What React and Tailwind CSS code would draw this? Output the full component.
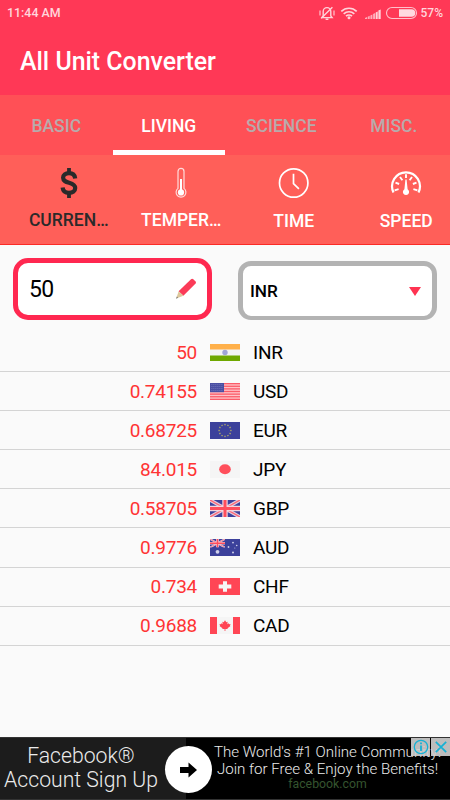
import { useState } from 'react';

const TABS = ['BASIC', 'LIVING', 'SCIENCE', 'MISC.'];

const RATES = [
    { code: 'INR', value: '50', Flag: IndiaFlag },
    { code: 'USD', value: '0.74155', Flag: UsaFlag },
    { code: 'EUR', value: '0.68725', Flag: EuFlag },
    { code: 'JPY', value: '84.015', Flag: JapanFlag },
    { code: 'GBP', value: '0.58705', Flag: UkFlag },
    { code: 'AUD', value: '0.9776', Flag: AustraliaFlag },
    { code: 'CHF', value: '0.734', Flag: SwissFlag },
    { code: 'CAD', value: '0.9688', Flag: CanadaFlag },
];

const UNITS = [
    { label: 'CURREN…', Icon: DollarIcon },
    { label: 'TEMPER…', Icon: ThermometerIcon },
    { label: 'TIME', Icon: ClockIcon },
    { label: 'SPEED', Icon: GaugeIcon },
];

function FlagBox({ children }) {
    return (
        <svg className="w-[30px] h-[17px] shrink-0" viewBox="0 0 30 17" preserveAspectRatio="none">
            {children}
        </svg>
    );
}

function IndiaFlag() {
    return (
        <FlagBox>
            <rect width="30" height="17" fill="#f4f4f4" />
            <rect width="30" height="5.5" fill="#ffb04a" />
            <rect y="11.5" width="30" height="5.5" fill="#6fa800" />
            <circle cx="15" cy="8.5" r="2.7" fill="#a0a4d6" />
        </FlagBox>
    );
}

function UsaFlag() {
    return (
        <FlagBox>
            <rect width="30" height="17" fill="#ffc3c8" />
            {[0, 1, 2, 3, 4, 5, 6].map((i) => (
                <rect key={i} y={i * 2.62} width="30" height="1.3" fill="#fb5c69" />
            ))}
            <rect width="14" height="9.2" fill="#4a4fa3" />
            {[1.5, 3.5, 5.5, 7.5].map((y) => (
                <path key={y} d={`M1.5 ${y}H13`} stroke="#9094cc" strokeWidth="0.7" strokeDasharray="0.8 1.2" />
            ))}
        </FlagBox>
    );
}

function EuFlag() {
    return (
        <FlagBox>
            <rect width="30" height="17" fill="#3c419b" />
            {[0, 30, 60, 90, 120, 150, 180, 210, 240, 270, 300, 330].map((a) => (
                <rect key={a} x="14.3" y="1.9" width="1.4" height="1.4" fill="#a9a56c" transform={`rotate(${a} 15 8.5)`} />
            ))}
        </FlagBox>
    );
}

function JapanFlag() {
    return (
        <FlagBox>
            <rect width="30" height="17" fill="#f5f5f5" />
            <ellipse cx="15" cy="8.3" rx="5.8" ry="5" fill="#ff4f5b" />
        </FlagBox>
    );
}

function UnionJack() {
    return (
        <>
            <rect width="30" height="17" fill="#3d429c" />
            <path d="M0 0L30 17M30 0L0 17" stroke="#e3cfe0" strokeWidth="3.6" />
            <path d="M0 0L30 17M30 0L0 17" stroke="#ff6673" strokeWidth="1.3" />
            <path d="M15 0V17M0 8.5H30" stroke="#f3d5dd" strokeWidth="5.4" />
            <path d="M15 0V17M0 8.5H30" stroke="#ff4d5c" strokeWidth="3" />
        </>
    );
}

function UkFlag() {
    return (
        <FlagBox>
            <UnionJack />
        </FlagBox>
    );
}

function AustraliaFlag() {
    return (
        <FlagBox>
            <rect width="30" height="17" fill="#3c419b" />
            <svg width="15" height="8.5" viewBox="0 0 30 17" preserveAspectRatio="none">
                <UnionJack />
            </svg>
            <g fill="#cfd0ea">
                <circle cx="7.5" cy="12.8" r="1.9" />
                <circle cx="18.5" cy="8" r="0.9" />
                <circle cx="23" cy="3.6" r="0.9" />
                <circle cx="26.7" cy="6.5" r="0.8" />
                <circle cx="24.8" cy="9" r="0.5" />
                <circle cx="23" cy="13.4" r="1" />
            </g>
        </FlagBox>
    );
}

function SwissFlag() {
    return (
        <FlagBox>
            <rect width="30" height="17" fill="#ff4655" />
            <path d="M13 3.3h4v3.3h4.3v3.8H17v3.3h-4v-3.3H8.7V6.6H13z" fill="#f5f5f5" />
        </FlagBox>
    );
}

function CanadaFlag() {
    return (
        <FlagBox>
            <rect width="30" height="17" fill="#f5f5f5" />
            <rect width="7" height="17" fill="#ff4655" />
            <rect x="23" width="7" height="17" fill="#ff4655" />
            <path
                d="M15 3.2l1.3 2 1.3-.5-.2 2.6 1.4-1 .4.9 1.4-.2-.7 1.5.6.6-3 2.1.2.9-2.3-.2v2h-.8v-2l-2.3.2.2-.9-3-2.1.6-.6-.7-1.5 1.4.2.4-.9 1.4 1-.2-2.6 1.3.5z"
                fill="#ff4655"
            />
        </FlagBox>
    );
}

function DollarIcon() {
    return (
        <svg className="w-8 h-8" viewBox="0 0 32 32" fill="none" stroke="#2a2a2a">
            <path d="M16 1v5M16 26v5" strokeWidth="3.8" />
            <path
                d="M22.2 11.4C21.800 8 19.700 6.200 16 6.200c-3.600 0-5.900 1.800-5.900 4.600 0 3.200 2.800 4 6 4.900 3.700 1.100 6.100 2.200 6.100 5.300s-2.500 4.900-6.200 4.900c-3.600 0-6-1.800-6.400-5.400"
                strokeWidth="4.2"
            />
        </svg>
    );
}

function ThermometerIcon() {
    return (
        <svg className="w-8 h-8" viewBox="0 0 32 32" fill="none">
            <path d="M13 21.4V4.4a3 3 0 0 1 6 0v17a4.9 4.9 0 1 1-6 0z" stroke="#ffdcdb" strokeWidth="1.2" />
            <path d="M16 12v13" stroke="white" strokeWidth="2" />
            <circle cx="16" cy="25.4" r="3.1" fill="white" />
        </svg>
    );
}

function ClockIcon() {
    return (
        <svg className="w-8 h-8" viewBox="0 0 32 32" fill="none" stroke="white">
            <circle cx="15.7" cy="16" r="14.2" strokeWidth="1.7" />
            <path d="M15.5 6.8v9.8l5.4 5.2" strokeWidth="1.7" />
        </svg>
    );
}

function GaugeIcon() {
    return (
        <svg className="w-8 h-8" viewBox="0 0 32 32" fill="none" stroke="white">
            <path d="M3.5 25.4A13.9 13.9 0 1 1 28.5 25.4" strokeWidth="2.2" />
            <path
                d="M4.6 23.4l4-1.2M5.5 15.6l3.6 1.4M10 10l2.4 3.2M16 7.3v3.8M22 10l-2.4 3.2M26.5 15.6l-3.6 1.4M27.4 23.4l-4-1.2"
                strokeWidth="1.9"
            />
            <path d="M15.4 12.5h1.2l1 9.8a3.1 3.1 0 1 1-3.2 0z" fill="white" stroke="none" />
        </svg>
    );
}

function StatusIcons() {
    return (
        <svg className="w-[100px] h-[14px]" viewBox="0 0 100 14" fill="none">
            <g stroke="#ffd3da" strokeWidth="1.4">
                <path d="M4.2 10V5.400a3.800 3.800 0 0 1 7.600 0V10l1.300 1.600H3z" />
                <path d="M2.200 12.200L13.400 1.200M6.600 13.200h2.800" />
                <path d="M1 4.500v5M15 4.500v5" strokeWidth="1.100" />
            </g>
            <g stroke="#ffd3da" strokeWidth="1.700">
                <path d="M22.300 5.400a11 11 0 0 1 15.400 0M24.700 7.900a7.600 7.600 0 0 1 10.600 0M27 10.200a4.400 4.400 0 0 1 6 0" />
            </g>
            <circle cx="30" cy="11.800" r="1.500" fill="#ffd3da" />
            <g fill="#ffabb9">
                <path d="M46 13v-1l2-.9V13zM48.700 13v-2.300l2-.9V13zM51.400 13V9.400l2-1V13zM54.100 13V7.900l2-1V13z" />
                <path d="M56.700 13V6.500l2-1V13zM59.400 13V4.600l2.300-1.200V13z" fill="#ffd3da" />
            </g>
            <rect x="67.500" y="1.500" width="30" height="11" rx="5.500" stroke="#ffc0cb" strokeWidth="1.100" />
            <path d="M80 3.200H92.500a3.800 3.800 0 0 1 0 7.600H80z" fill="#ffd9df" />
        </svg>
    );
}

function Pencil() {
    return (
        <svg className="w-[22px] h-[22px]" viewBox="0 0 22 22">
            <path d="M3.6 13.3L16 1.3q1.200-.9 2.300 0l2.300 2.300q.8 1 0 2L8.400 17.800z" fill="#fb3b58" />
            <path d="M3.6 13.3L8.4 17.8 1.3 20.600z" fill="#ddc79b" />
            <path d="M1.8 18.6l1.3 1.2-2 1z" fill="#777" />
        </svg>
    );
}

export default function App() {
    const [tab, setTab] = useState('LIVING');
    const [unit, setUnit] = useState('CURREN…');

    return (
        <div className="w-[450px] h-[800px] flex flex-col overflow-hidden bg-[#fafafa] text-black font-[Roboto,sans-serif]">
            <header className="h-[95px] shrink-0 bg-[#ff3856] text-white">
                <div className="h-[26px] flex items-center justify-between pl-[7px] pr-[7px] text-[#ffd6dc]">
                    <span className="text-[12.4px] font-medium">11:44 AM</span>
                    <div className="flex items-center gap-[2px]">
                        <StatusIcons />
                        <span className="text-[12px] font-medium">57%</span>
                    </div>
                </div>
                <h1 className="h-[70px] flex items-center pt-[2px] pl-5 text-[24.9px] font-medium">All Unit Converter</h1>
            </header>

            <nav className="h-[60px] shrink-0 grid grid-cols-4 bg-[#ff5056]">
                {TABS.map((name) => (
                    <button
                        key={name}
                        onClick={() => setTab(name)}
                        className={`pt-[7px] border-b-5 text-[17.5px] font-medium ${
                            tab === name ? 'text-white border-white' : 'text-[#b8aaab] border-transparent'
                        }`}
                    >
                        {name}
                    </button>
                ))}
            </nav>

            <nav className="h-[90px] shrink-0 grid grid-cols-4 bg-[#ff5f59] border-b border-[#fb2b26]">
                {UNITS.map(({ label, Icon }) => (
                    <button
                        key={label}
                        onClick={() => setUnit(label)}
                        className={`flex flex-col items-center pt-3 pl-[25px] text-[17.5px] font-medium leading-[22px] ${
                            unit === label ? 'text-[#2a2a2a]' : 'text-white'
                        } ${label.endsWith('…') ? 'gap-[10px]' : 'gap-[11px]'}`}
                    >
                        <Icon />
                        {label}
                    </button>
                ))}
            </nav>

            <div className="h-[88px] shrink-0 flex items-start gap-[26px] pt-[13px] pl-[13px]">
                <div className="w-[199px] h-[62px] flex items-center justify-between pl-[11px] pr-[10px] bg-white rounded-[15px] border-[5px] border-[#ff2850]">
                    <span className="pt-[3px] text-[23px] tracking-[-0.8px]">50</span>
                    <Pencil />
                </div>
                <div className="mt-[3px] w-[199px] h-[59px] flex items-center justify-between pl-[7px] pr-[11px] bg-white rounded-[13px] border-[5px] border-b-4 border-[#b3b3b3]">
                    <span className="pt-[2px] text-[17.2px] font-medium">INR</span>
                    <svg className="w-3 h-[9px]" viewBox="0 0 12 9">
                        <path d="M0 0h12L6 9z" fill="#ff3351" />
                    </svg>
                </div>
            </div>

            <ul className="grow">
                {RATES.map(({ code, value, Flag }) => (
                    <li key={code} className="h-[39.1px] flex items-center border-b border-[#d4d4d4] text-[19px] tracking-[-0.25px]">
                        <span className="w-[197px] pt-[2px] text-right text-[#ff3434]">{value}</span>
                        <span className="w-14 flex justify-center">
                            <Flag />
                        </span>
                        <span className="pt-[2px]">{code}</span>
                    </li>
                ))}
            </ul>

            <footer className="relative h-[63px] shrink-0 flex bg-black border-y border-[#333] text-[#ebebeb]">
                <div className="w-[186px] bg-[#1c1c1c] pt-[6px] pr-[24px] text-center text-[21.2px] leading-[23.5px] font-light whitespace-nowrap">
                    <p>Facebook®</p>
                    <p>Account Sign Up</p>
                </div>
                <div className="grow pt-[6px] pl-[19px] text-center text-[15.1px] leading-[17px] font-light whitespace-nowrap">
                    <p>The World's #1 Online Community!</p>
                    <p>Join for Free &amp; Enjoy the Benefits!</p>
                    <p className="text-[12.3px] leading-[12px] font-normal text-[#35542f]">facebook.com</p>
                </div>
                <div className="absolute left-[165px] top-[8px] size-[47px] rounded-full bg-white flex items-center justify-center">
                    <svg className="w-[17px] h-4" viewBox="0 0 17 16">
                        <path d="M0 5h8.5V.5L17 8l-8.5 7.5V11H0z" fill="black" />
                    </svg>
                </div>
                <div className="absolute right-0 top-0 flex gap-px">
                    <span className="w-[19px] h-[18px] bg-[#d2d2d2]/90 flex items-center justify-center">
                        <svg className="size-4" viewBox="0 0 16 16" fill="none" stroke="#16b1d4">
                            <circle cx="8" cy="8" r="6.7" strokeWidth="1.3" />
                            <path d="M8 6.5v5.5M8 3.5v1.7" strokeWidth="1.8" />
                        </svg>
                    </span>
                    <span className="w-[19px] h-[18px] bg-[#d2d2d2]/90 flex items-center justify-center">
                        <svg className="size-3" viewBox="0 0 12 12" stroke="#16b1d4" strokeWidth="1.7">
                            <path d="M.8.8l10.4 10.4M11.2.8L.8 11.2" />
                        </svg>
                    </span>
                </div>
            </footer>
        </div>
    );
}
